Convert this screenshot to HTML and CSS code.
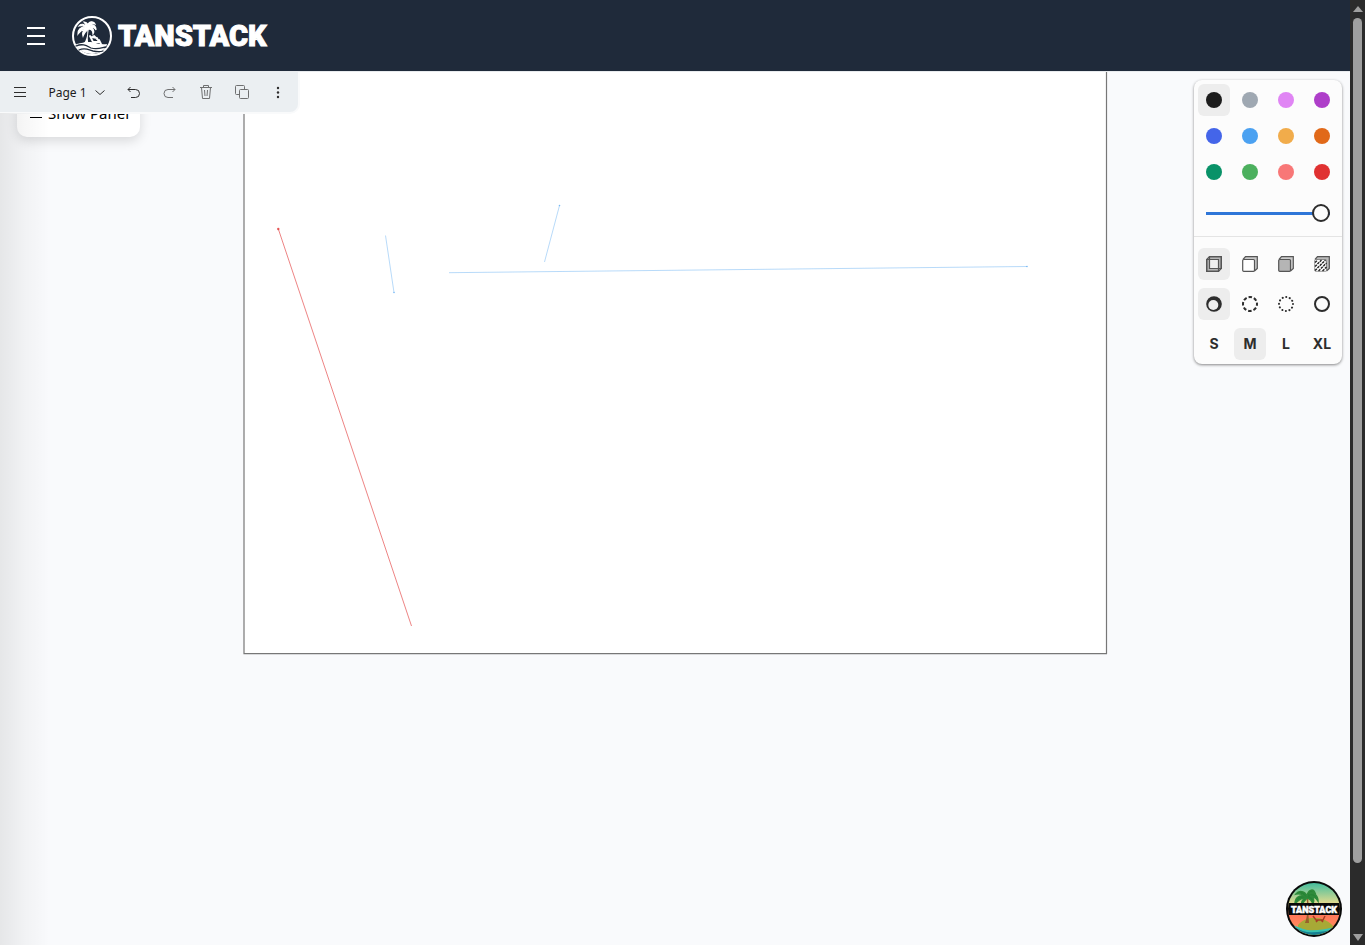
FILE: index.html
```html
<!DOCTYPE html>
<html lang="en">
<head>
<meta charset="utf-8">
<meta name="viewport" content="width=device-width, initial-scale=1">
<title>TanStack</title>
<link rel="stylesheet" href="styles.css">
</head>
<body>
<div class="app">
  <header class="header">
    <button class="menu-btn" aria-label="Open menu">
      <svg width="24" height="24" viewBox="0 0 24 24" fill="none" stroke="currentColor" stroke-width="2"><path d="M3 4h18M3 12h18M3 20h18"/></svg>
    </button>
    <a class="brand" href="#" aria-label="TanStack">
      <svg width="40" height="40" viewBox="0 0 40 40" fill="none" stroke="#fff" stroke-linecap="round">
        <circle cx="20" cy="20" r="19" stroke-width="2"/>
        <path d="M15 12c1 6 0 11-4 17h6c-2-5-1-11 0-17z" fill="#fff" stroke="none"/>
        <path d="M15 12c-2-4-6-5-8-2 3-1 5 0 6 1-5 0-7 3-7 7 2-3 4-4 7-5-2 2-3 4-2 7 1-3 3-5 5-7 4 0 5 3 5 5 2-3 0-6-3-7 3 0 5 1 6 3 0-5-4-6-7-4 1-2 4-3 6-2-1-3-6-3-7 1-1-2-2-3-4-3 2 2 3 4 3 6z" fill="#fff" stroke-width="1.200"/>
        <path d="M4 28c6-1 8-2 13-2 6 0 9 3 18 2-1 6-8 10-15 10S6 34 4 28z" fill="#fff" stroke="none"/>
        <path d="M18 20l3 6h6l-2-4-5-1M22 20l3 3M27 24l2 4" stroke-width="1.800"/>
        <path d="M4 30c7-3 11 0 15 2 6 2 10 0 15-1M7 34c6-3 10 0 14 1 5 1 7 1 10 0" stroke="#1f2a3a" stroke-width="1.300"/>
      </svg>
      <span class="wordmark">TANSTACK</span>
    </a>
  </header>
  <main class="stage">
    <svg class="canvas" width="1350" height="874" viewBox="0 71 1350 874" fill="none" aria-label="Drawing">
      <path d="M244 60h862.500v593.600H244z" fill="#fff" stroke="#777" stroke-width="1.200"/>
      <path d="M278.500 229.500L411.500 626" stroke="#e03131" stroke-width=".6"/>
      <circle cx="278.300" cy="229" r="1.200" fill="#e03131" opacity=".8"/>
      <g stroke="#4ba1f1" stroke-width=".4"><path d="M385.500 235.500L394 292.500M559.500 205.500L544.500 262M449 272.700L1027 266.500"/></g>
      <g fill="#4ba1f1" opacity=".7"><circle cx="394" cy="292.500" r=".8"/><circle cx="559.500" cy="205.500" r=".8"/><circle cx="1027" cy="266.500" r=".8"/></g>
    </svg>
    <button class="show-panel">
      <svg width="12" height="14" viewBox="0 0 12 14" stroke="currentColor" stroke-width="1"><path d="M0 3.500h12M0 7.500h12M0 11.500h12"/></svg>
      <span>Show Panel</span>
    </button>
    <nav class="toolbar" aria-label="Page actions">
      <button class="tool" aria-label="Menu"><svg width="14" height="14" viewBox="0 0 14 14"><path d="M1 2.500h12M1 7.500h12M1 11.500h12"/></svg></button>
      <button class="page-btn">Page 1 <svg width="12" height="12" viewBox="0 0 12 12"><path d="M1.500 4.500l4.500 4 4.500-4"/></svg></button>
      <button class="tool" aria-label="Undo"><svg width="14" height="14" viewBox="0 0 14 14"><path d="M3.500 2L1 4.500 3.500 7M1 4.500h7.500a4 4 0 0 1 0 8H4"/></svg></button>
      <button class="tool dim" aria-label="Redo"><svg width="14" height="14" viewBox="0 0 14 14"><path d="M9.500 2L12 4.500 9.500 7M12 4.500H5a4 4 0 0 0 0 8h5"/></svg></button>
      <button class="tool dim" aria-label="Delete"><svg width="14" height="16" viewBox="0 0 14 16"><path d="M1 3.500h12M4.500 3.500v-2h5v2M2.500 3.500l1 11h7l1-11M5.500 6l.5 6M8.500 6L8 12"/></svg></button>
      <button class="tool dim" aria-label="Duplicate"><svg width="14" height="14" viewBox="0 0 14 14"><rect x="4.500" y="4.500" width="9" height="9" rx="1"/><path d="M4.500 9.500h-3a1 1 0 0 1-1-1v-7a1 1 0 0 1 1-1h7a1 1 0 0 1 1 1v3"/></svg></button>
      <button class="tool" aria-label="More"><svg width="14" height="14" viewBox="0 0 14 14"><g fill="#2d2d2d" stroke="none"><circle cx="7" cy="3" r="1.200"/><circle cx="7" cy="7.500" r="1.200"/><circle cx="7" cy="12" r="1.200"/></g></svg></button>
    </nav>
    <aside class="styles" aria-label="Styles">
      <div class="grid">
        <button class="cell on" aria-label="Black"><i class="dot black"></i></button>
        <button class="cell" aria-label="Grey"><i class="dot grey"></i></button>
        <button class="cell" aria-label="Light violet"><i class="dot light-violet"></i></button>
        <button class="cell" aria-label="Violet"><i class="dot violet"></i></button>
        <button class="cell" aria-label="Blue"><i class="dot blue"></i></button>
        <button class="cell" aria-label="Light blue"><i class="dot light-blue"></i></button>
        <button class="cell" aria-label="Yellow"><i class="dot yellow"></i></button>
        <button class="cell" aria-label="Orange"><i class="dot orange"></i></button>
        <button class="cell" aria-label="Green"><i class="dot green"></i></button>
        <button class="cell" aria-label="Light green"><i class="dot light-green"></i></button>
        <button class="cell" aria-label="Light red"><i class="dot light-red"></i></button>
        <button class="cell" aria-label="Red"><i class="dot red"></i></button>
      </div>
      <div class="slider-row"><input class="slider" type="range" min="0" max="100" value="100" aria-label="Opacity"></div>
      <div class="grid options">
        <button class="cell on" aria-label="No fill"><svg width="16" height="16" viewBox="0 0 16 16"><path d="M.7 3.500L3.500.7h11.800v11.800l-2.800 2.800H.7z" fill="#b5b5b5"/><path d="M3.500 3.500h9v9h-9z" fill="#eee" stroke="none"/><path d="M.7 3.500h11.800v11.800H.7zM3.500.7h11.800v11.800H3.500z"/></svg></button>
        <button class="cell" aria-label="Semi fill"><svg width="16" height="16" viewBox="0 0 16 16"><path d="M1 3.500L3.500.7h11.800v11.800l-2.800 2.500" fill="#c8c8c8"/><rect x=".7" y="3.500" width="11.800" height="11.800" rx="1" fill="#fff"/></svg></button>
        <button class="cell" aria-label="Solid fill"><svg width="16" height="16" viewBox="0 0 16 16"><path d="M1 3.500L3.500.7h11.800v11.800l-2.800 2.500" fill="#ccc"/><rect x=".7" y="3.500" width="11.800" height="11.800" rx="1" fill="#b5b5b5"/></svg></button>
        <button class="cell" aria-label="Pattern fill"><svg width="16" height="16" viewBox="0 0 16 16"><path d="M1 3.500L3.500.7h11.800v11.800l-2.800 2.500" fill="#bbb"/><rect x=".7" y="3.500" width="11.800" height="11.800" rx="1" fill="#fff" stroke-width=".6"/><path d="M1 6.500l2.500-2.500M1 10.500L7.500 4M1 14.500L11.500 4M4.500 15l8-8M8.500 15l4-4" stroke="#222" stroke-width="1.400" stroke-dasharray="2.600 .8"/></svg></button>
        <button class="cell on" aria-label="Draw"><svg width="16" height="16" viewBox="0 0 16 16"><circle cx="8" cy="8" r="7.800" fill="#2d2d2d" stroke="none"/><circle cx="7.300" cy="9" r="5" fill="#eee" stroke="none"/></svg></button>
        <button class="cell" aria-label="Dashed"><svg width="16" height="16" viewBox="0 0 16 16"><circle class="ring" cx="8" cy="8" r="7" stroke-dasharray="3.500 2" stroke-dashoffset="1.700"/></svg></button>
        <button class="cell" aria-label="Dotted"><svg width="16" height="16" viewBox="0 0 16 16"><circle class="ring" cx="8" cy="8" r="7" stroke-dasharray=".1 3.565" stroke-linecap="round"/></svg></button>
        <button class="cell" aria-label="Solid"><svg width="16" height="16" viewBox="0 0 16 16"><circle class="ring" cx="8" cy="8" r="7"/></svg></button>
        <button class="cell">S</button>
        <button class="cell on">M</button>
        <button class="cell">L</button>
        <button class="cell">XL</button>
      </div>
    </aside>
    <a class="badge" href="#" aria-label="TanStack home">
      <svg width="56" height="56" viewBox="0 0 56 56">
        <defs>
          <linearGradient id="sky" x2="0" y2="1"><stop stop-color="#35bba0"/><stop offset=".45" stop-color="#f7de8b"/><stop offset=".6" stop-color="#ff7659"/><stop offset="1" stop-color="#ff9c62"/></linearGradient>
          <clipPath id="disc"><circle cx="28" cy="28" r="26"/></clipPath>
        </defs>
        <circle cx="28" cy="28" r="28" fill="#090909"/>
        <g clip-path="url(#disc)">
          <path d="M0 0h56v56H0z" fill="url(#sky)"/>
          <path d="M12 44c7-9 25-11 36 2l-4 10H13z" fill="#a7a936"/>
          <path d="M20 15c2 9 2 19-1 27h4c-1-9 0-18-1-27z" fill="#98602b"/>
          <path d="M21 15c-2-5-8-6-11-2 4-1 6 0 8 2-5-1-9 2-9 8 3-4 6-6 10-6-3 2-4 4-3 7 1-3 3-5 5-7 4 1 5 3 6 6 2-4 0-7-3-8 4 0 6 2 8 5 0-6-5-9-9-7 2-2 4-2 6-1-2-5-7-3-8 3z" fill="#268435" stroke="#2e8a3a" stroke-width="1.500"/>
          <path d="M27 35l3 4h7l2-4M30 41l2-2M35 39l2 2" fill="none" stroke="#a83e24" stroke-width="1.500"/>
          <path d="M0 44c8-1 12 5 20 6s21 0 36-4v12H0z" fill="#167f91"/>
          <path d="M1 44c8 0 12 5 20 6s17 0 33-4" fill="none" stroke="#37c2b2" stroke-width="2"/>
          <path d="M0 22h56v12H0z" fill="#090909"/>
        </g>
        <text class="badge-text" x="28" y="32" text-anchor="middle">TANSTACK</text>
      </svg>
    </a>
  </main>
</div>
<div class="scrollbar" aria-hidden="true"><i class="arrow up"></i><i class="thumb"></i><i class="arrow down"></i></div>
<div class="drawer-shadow"></div>
</body>
</html>
```

FILE: styles.css
```css
* { box-sizing: border-box; }
body { margin: 0; min-height: 100vh; display: flex; background: #f9fafc; font-family: "Noto Sans", sans-serif; }
button { border: 0; padding: 0; background: none; color: inherit; font: inherit; display: flex; align-items: center; justify-content: center; }
.app { flex: 1; min-width: 0; display: flex; flex-direction: column; }
.header { height: 71px; padding: 0 24px; display: flex; align-items: center; gap: 24px; background: #1f2a3a; color: #fff; }
.brand { display: flex; align-items: center; gap: 6px; color: #fff; text-decoration: none; }
.wordmark { font: 900 29px/40px Roboto, sans-serif; -webkit-text-stroke: 1px #fff; }
.stage { flex: 1; position: relative; overflow: hidden; border-top: 1px solid #e8ebee; }
.canvas { position: absolute; top: -1px; left: 0; }
.show-panel { position: absolute; top: 17px; left: 17px; padding: 12px 11px 12px 13px; gap: 6px; border-radius: 10px; background: #fff; color: #000; font-size: 15px; line-height: 24px; box-shadow: 0 4px 12px #0002; }
.toolbar { position: absolute; top: 0; left: 0; display: flex; align-items: center; height: 42px; padding: 0 2px; background: #ebeff2; border: solid #f9fafb; border-width: 0 2px 2px 0; border-radius: 0 0 10px 0; color: #1d1d1d; }
.toolbar svg { fill: none; stroke: #2d2d2d; }
.tool { width: 36px; height: 40px; }
.page-btn { width: 78px; height: 40px; gap: 7px; font-size: 12px; }
.dim { opacity: .65; }
.styles { position: absolute; top: 8px; right: 8px; width: 148px; border-radius: 8px; background: #fcfcfc; box-shadow: 0 1px 3px #0007; color: #2d2d2d; }
.grid { display: grid; grid-template-columns: repeat(4, 32px); gap: 4px; padding: 4px; }
.options { row-gap: 8px; padding-top: 11px; }
.cell { height: 32px; border-radius: 6px; font: 700 14px/32px Inter, sans-serif; }
.cell svg { fill: none; stroke: #555; stroke-width: 1.2; }
.cell .ring { stroke: #2d2d2d; stroke-width: 2; }
.on { background: #ededed; }
.dot { width: 16px; height: 16px; border-radius: 50%; }
.black { background: #1d1d1d; }
.grey { background: #9fa8b2; }
.light-violet { background: #e085f4; }
.violet { background: #ae3ec9; }
.blue { background: #4465e9; }
.light-blue { background: #4ba1f1; }
.yellow { background: #f1ac4b; }
.orange { background: #e16919; }
.green { background: #099268; }
.light-green { background: #4cb05e; }
.light-red { background: #f87777; }
.red { background: #e03131; }
.slider-row { height: 45px; padding: 0 12px 2px; display: flex; align-items: center; border-bottom: 1px solid #e4e4e4; }
.slider { appearance: none; width: 100%; height: 18px; margin: 0; background: linear-gradient(#2f76d8, #2f76d8) center / 100% 3px no-repeat; }
.slider::-webkit-slider-thumb { appearance: none; width: 18px; height: 18px; border: 2px solid #2d2d2d; border-radius: 50%; background: #fcfcfc; }
.badge { position: absolute; right: 8px; bottom: 8px; width: 56px; height: 56px; }
.badge svg { display: block; }
.badge-text { font: 900 9px Roboto, sans-serif; fill: #fff; stroke: #fff; stroke-width: .5px; }
.scrollbar { width: 15px; padding: 6px 3px 4px; display: flex; flex-direction: column; align-items: center; background: #2b2b2b; }
.thumb { width: 9px; height: 845px; margin-top: 6px; border-radius: 5px; background: #9f9f9f; }
.arrow { border: 5px solid transparent; }
.up { border-top: 0; border-bottom: 6px solid #9f9f9f; }
.down { margin-top: auto; border-bottom: 0; border-top: 7px solid #9f9f9f; }
.drawer-shadow { position: absolute; inset: 113px auto 0 0; width: 50px; background: linear-gradient(90deg, #00000014, #00000008 50%, #0000); pointer-events: none; }
```
